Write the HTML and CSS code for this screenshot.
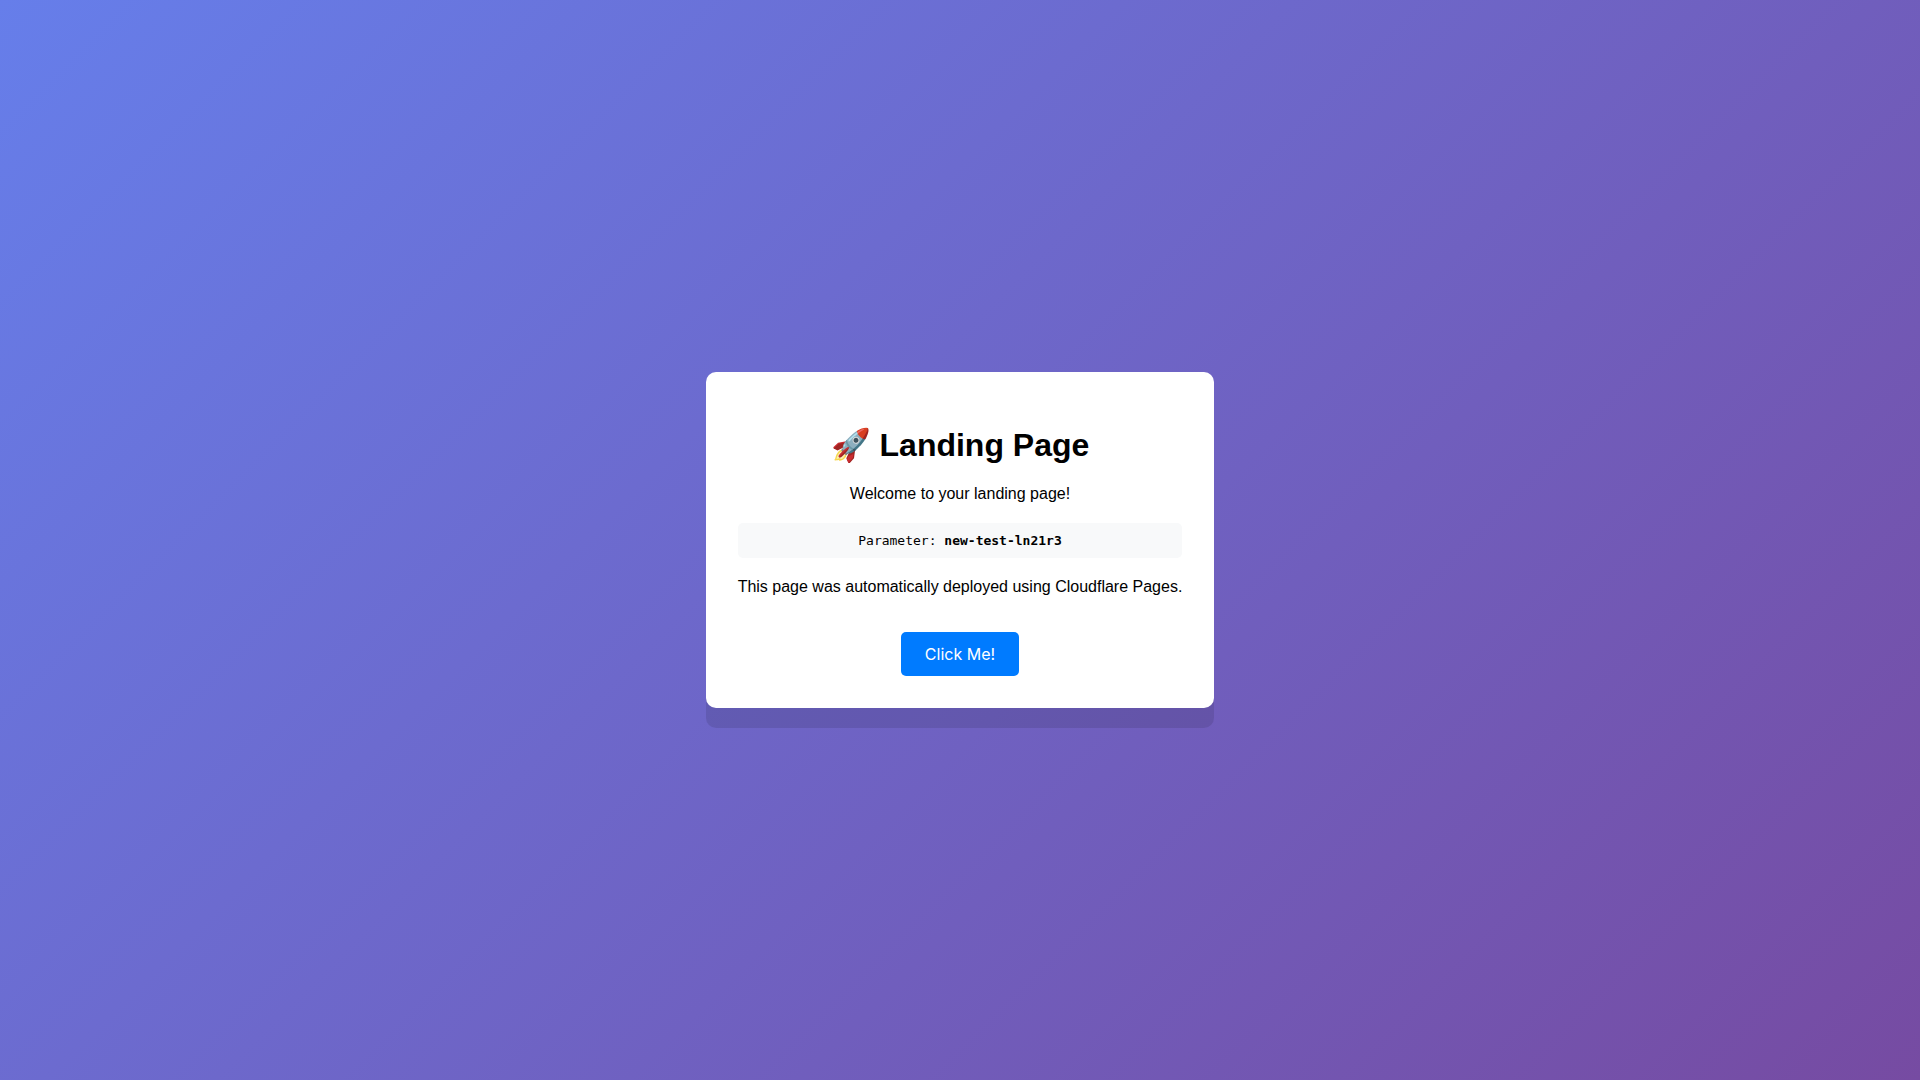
FILE: index.html
```html
<!DOCTYPE html>
<html lang="en">

<head>
    <meta charset="UTF-8">
    <meta name="viewport" content="width=device-width, initial-scale=1.0">
    <title>Landing Page</title>
    <link rel="stylesheet" href="styles.css">
</head>

<body>
    <div class="container">
        <h1>🚀 Landing Page</h1>
        <p>Welcome to your landing page!</p>
        <div class="param">
            Parameter: <strong>new-test-ln21r3</strong>
        </div>
        <p>This page was automatically deployed using Cloudflare Pages.</p>
        <button type="button" class="cta">Click Me!</button>
    </div>
</body>

</html>
```

FILE: styles.css
```css
body {
    font-family: Arial, "Liberation Sans", sans-serif;
    margin: 0;
    min-height: 100vh;
    display: flex;
    align-items: center;
    justify-content: center;
    background: linear-gradient(135deg, #667eea 0%, #764ba2 100%);
}

.container {
    background: #fff;
    padding: 32px;
    border-radius: 10px;
    text-align: center;
    box-shadow: 0 20px 0 rgba(0, 0, 0, 0.1);
}

.param {
    background: #f8f9fa;
    padding: 10px;
    border-radius: 5px;
    margin: 20px 0;
    font-family: "DejaVu Sans Mono", monospace;
    font-size: 13px;
}

.cta {
    background: #007bff;
    color: #fff;
    border: none;
    padding: 12px 24px;
    border-radius: 5px;
    margin-top: 20px;
    font-family: Inter, sans-serif;
    font-size: 16px;
    cursor: pointer;
}
```
